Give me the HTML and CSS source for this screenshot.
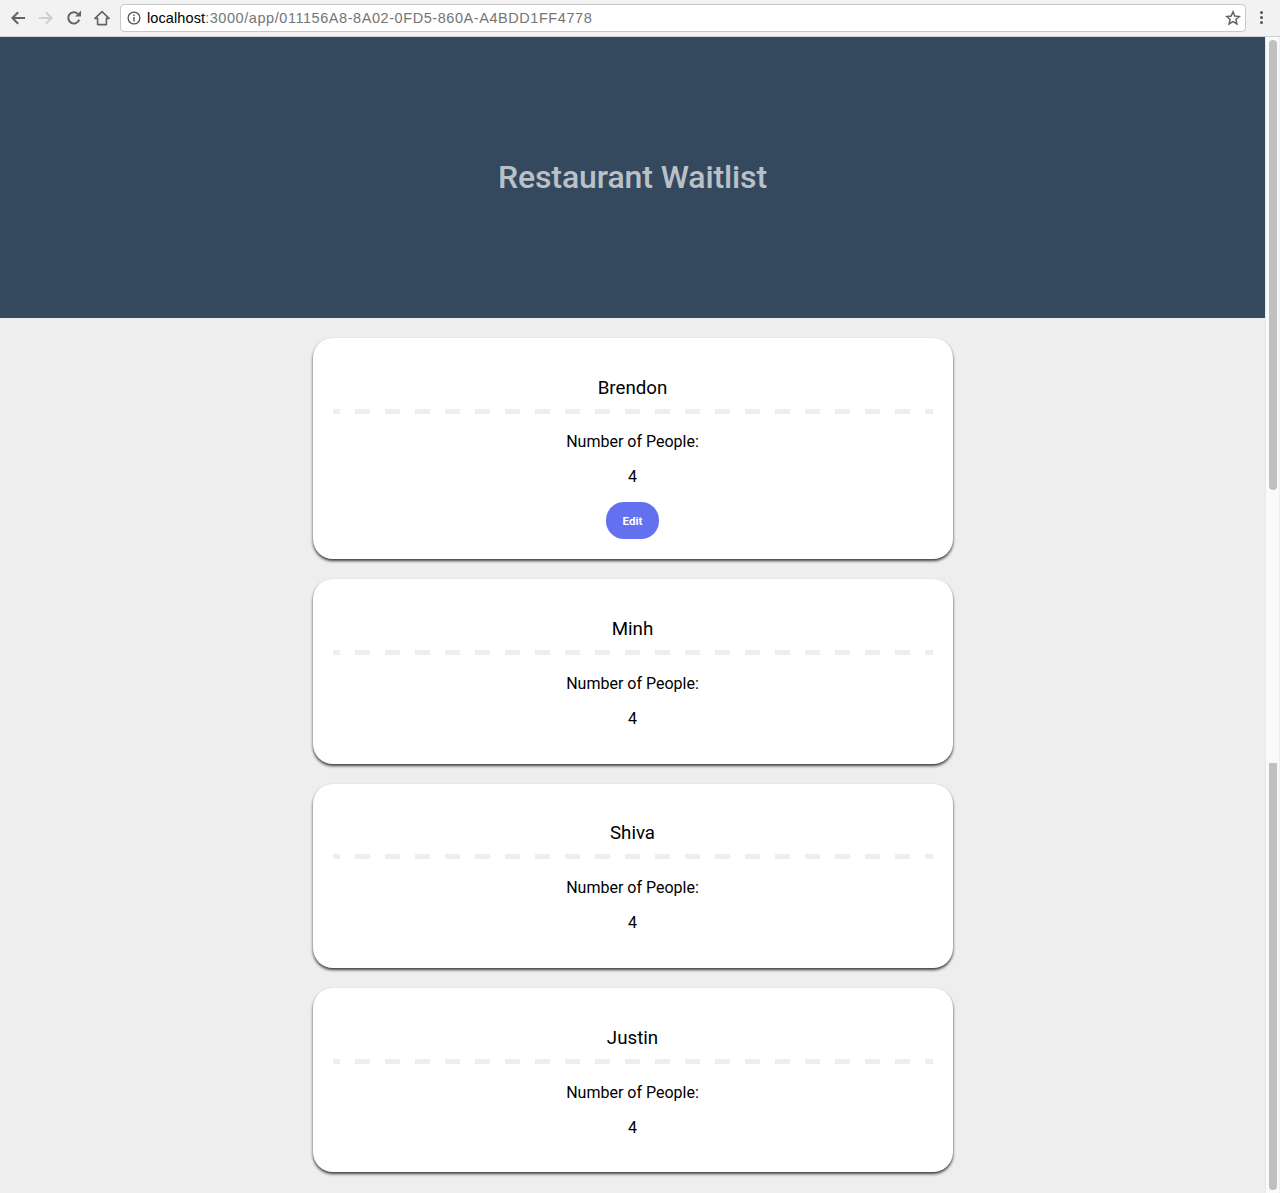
FILE: index.html
```html
<!DOCTYPE html>
<html lang="en">
<head>
<meta charset="utf-8">
<title>Restaurant Waitlist</title>
<link rel="stylesheet" href="styles.css">
</head>
<body>
<div class="toolbar">
  <svg class="tool" width="16" height="16" viewBox="0 0 16 16"><path d="M15 8H2.5M8.2 2.2 2.4 8l5.8 5.8" fill="none" stroke="#636363" stroke-width="2"/></svg>
  <svg class="tool" width="16" height="16" viewBox="0 0 16 16"><path d="M1 8h12.5M7.8 2.2 13.6 8l-5.8 5.8" fill="none" stroke="#cfcfcf" stroke-width="2"/></svg>
  <svg class="tool" width="16" height="16" viewBox="0 0 16 16"><path d="M13.2 9.6A5.6 5.6 0 1 1 12 4.1" fill="none" stroke="#636363" stroke-width="2"/><path d="M9.2 6.4H15V.6z" fill="#636363"/></svg>
  <svg class="tool" width="16" height="16" viewBox="0 0 16 16"><path d="M8 1.6 1 8.4h2.6v6.2h8.8V8.4H15z" fill="none" stroke="#636363" stroke-width="1.6" stroke-linejoin="round"/></svg>
  <div class="omnibox">
    <svg class="info" width="14" height="14" viewBox="0 0 14 14"><circle cx="7" cy="7" r="5.9" fill="none" stroke="#555" stroke-width="1.3"/><path d="M6.3 6h1.4v4.4H6.3zM6.3 3.4h1.4v1.5H6.3z" fill="#555"/></svg>
    <span class="url"><span class="host">localhost</span>:3000/app/011156A8-8A02-0FD5-860A-A4BDD1FF4778</span>
    <svg class="star" width="16" height="16" viewBox="0 0 16 16"><path d="m8 1.8 1.8 4.3 4.6.4-3.5 3 1 4.5L8 11.6l-3.9 2.4 1-4.5-3.5-3 4.6-.4z" fill="none" stroke="#636363" stroke-width="1.5"/></svg>
  </div>
  <div class="kebab"><i></i><i></i><i></i></div>
</div>
<div class="viewport">
  <div class="page">
    <header class="hero"><h1>Restaurant Waitlist</h1></header>
    <main class="list">
      <section class="card">
        <h3>Brendon</h3>
        <p>Number of People:</p>
        <p>4</p>
        <button class="edit">Edit</button>
      </section>
      <section class="card card-plain">
        <h3>Minh</h3>
        <p>Number of People:</p>
        <p>4</p>
      </section>
      <section class="card card-plain">
        <h3>Shiva</h3>
        <p>Number of People:</p>
        <p>4</p>
      </section>
      <section class="card card-plain">
        <h3>Justin</h3>
        <p>Number of People:</p>
        <p>4</p>
      </section>
    </main>
  </div>
  <div class="scrollbar">
    <div class="thumb thumb-top"></div>
    <div class="track-gap"></div>
    <div class="thumb thumb-bottom"></div>
  </div>
</div>
</body>
</html>
```
FILE: styles.css
```css
* { box-sizing: border-box; }
html, body { margin: 0; height: 100%; overflow: hidden; }
body {
  background: #eee;
  font-family: Roboto, "Liberation Sans", sans-serif;
  color: #000;
  display: flex;
  flex-direction: column;
}
.toolbar {
  height: 37px;
  flex: none;
  display: flex;
  align-items: center;
  background: #f2f2f2;
  border-bottom: 1px solid #d0d0d0;
  padding: 0 0 1px 10px;
}
.tool { flex: none; margin-right: 12px; }
.omnibox {
  flex: none;
  width: 1126px;
  height: 28px;
  margin-left: -2px;
  display: flex;
  align-items: center;
  background: #fff;
  border: 1px solid #c8c8c8;
  border-radius: 4px;
  padding: 0 4px 0 6px;
}
.info { flex: none; margin-right: 6px; }
.url {
  flex: 1;
  font-family: "Liberation Sans", Arial, sans-serif;
  font-size: 14.5px;
  color: #757575;
  letter-spacing: 0.56px;
  white-space: nowrap;
}
.host { color: #000; letter-spacing: 0.1px; }
.star { flex: none; }
.kebab {
  flex: none;
  width: 4px;
  margin-left: 14px;
  display: flex;
  flex-direction: column;
  gap: 2px;
}
.kebab i { display: block; width: 3px; height: 3px; border-radius: 50%; background: #555; }
.viewport { flex: 1; min-height: 0; display: flex; }
.page { flex: 1; min-width: 0; }
.hero {
  height: 281px;
  padding-bottom: 2px;
  background: #34495e;
  display: flex;
  align-items: center;
  justify-content: center;
}
.hero h1 {
  margin: 0;
  font-size: 32px;
  font-weight: 500;
  letter-spacing: -0.1px;
  color: rgba(255, 255, 255, 0.68);
}
.list {
  display: flex;
  flex-direction: column;
  align-items: center;
  gap: 20px;
  padding-top: 20px;
}
.card {
  width: 640px;
  background: #fff;
  border-radius: 20px;
  padding: 20px;
  text-align: center;
  box-shadow: 0 2px 3px rgba(0, 0, 0, 0.75);
}
.card-plain { padding-bottom: 19.88px; }
.card h3 {
  margin: 18.72px 0;
  padding-bottom: 15px;
  font-size: 18.72px;
  font-weight: 400;
  background: linear-gradient(90deg, #eee 15px, transparent 15px) -8px 100% / 30px 5px repeat-x;
}
.card p { margin: 16px 0; font-size: 16px; }
.edit {
  display: block;
  margin: 0 auto;
  width: 53px;
  height: 37px;
  border: 0;
  border-radius: 18px;
  background: #6370f0;
  color: #fff;
  font-family: Roboto, sans-serif;
  font-size: 11.6px;
  font-weight: 700;
  padding: 1px 0 0;
}
.scrollbar {
  flex: none;
  width: 15px;
  background: #fafafa;
  border-left: 1px solid #e8e8e8;
  border-right: 1px solid #f0f0f0;
  padding: 3px 2px 3px 3px;
  display: flex;
  flex-direction: column;
}
.thumb { background: #c0c0c0; }
.thumb-top { height: 450px; border-radius: 4px; }
.track-gap { height: 273px; }
.thumb-bottom { flex: 1; border-radius: 0 0 4px 4px; }
```
